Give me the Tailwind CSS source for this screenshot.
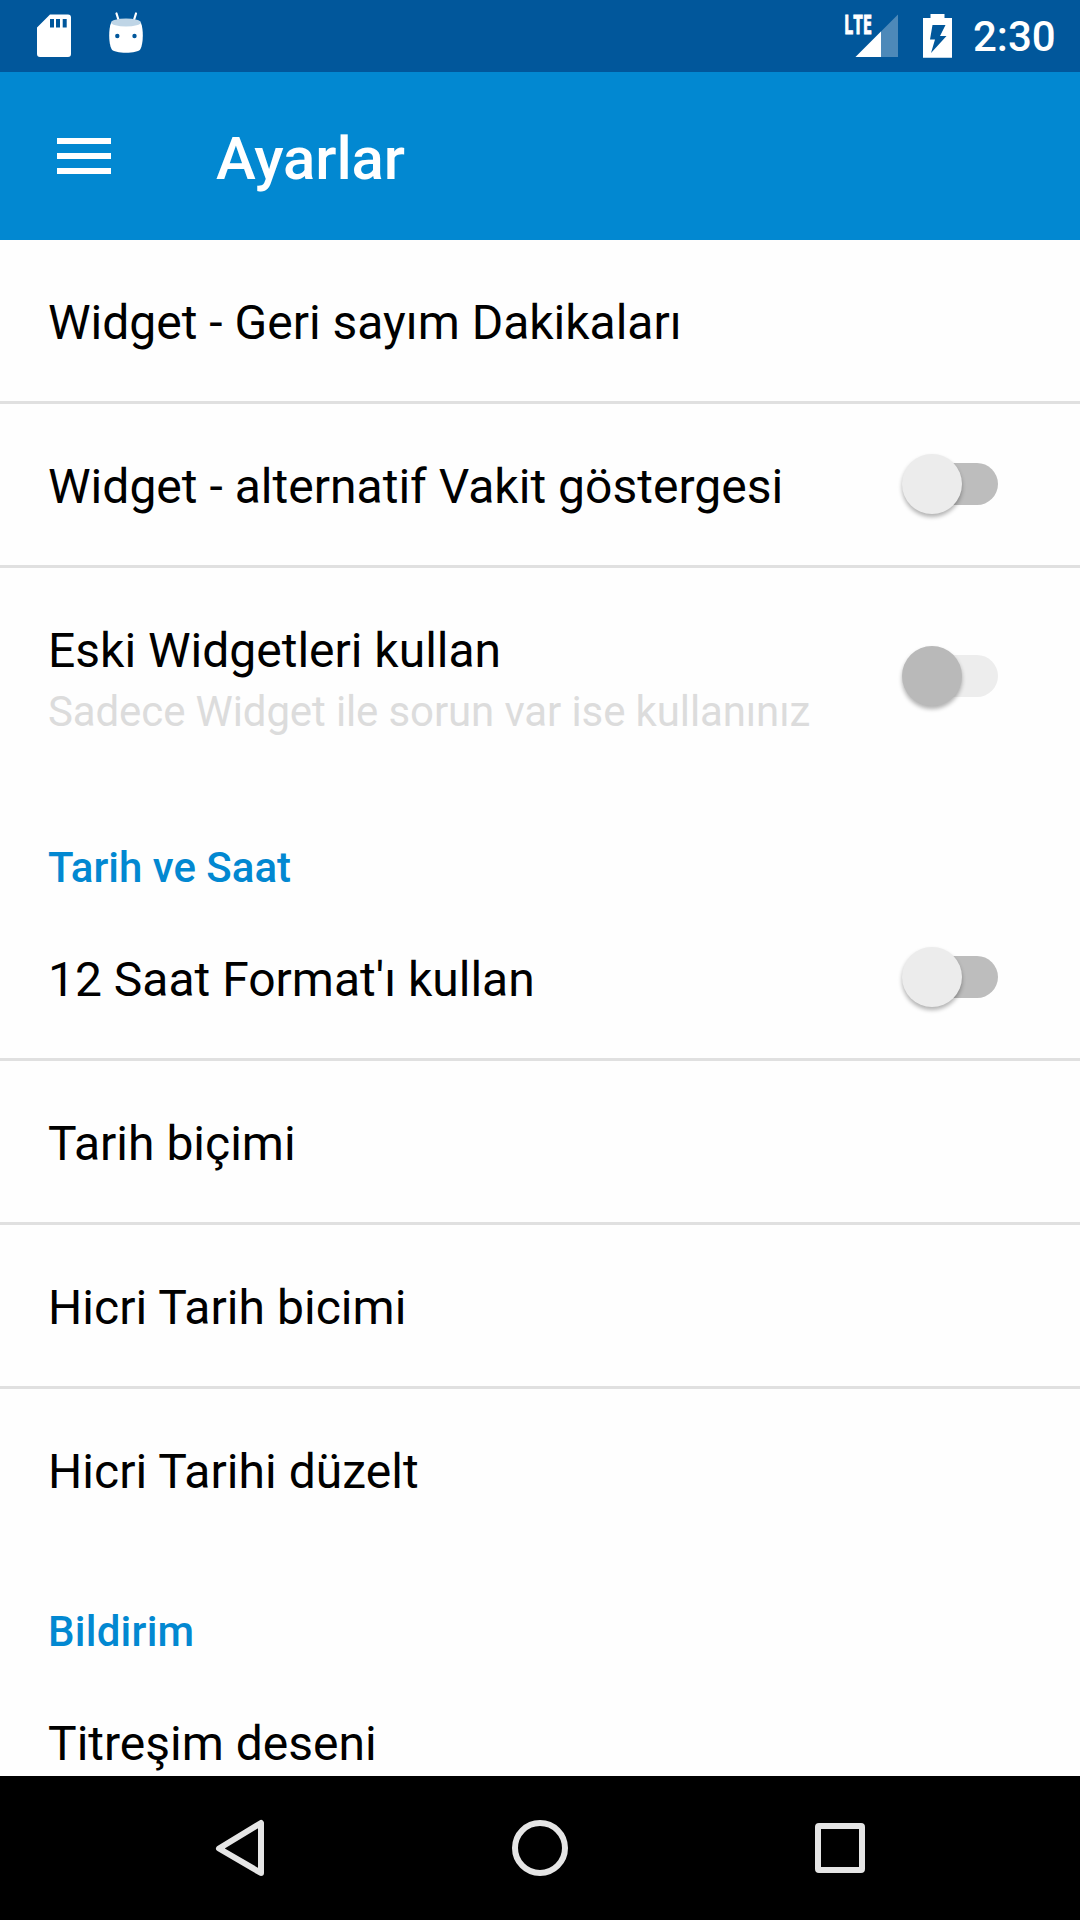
<!DOCTYPE html>
<html lang="tr">
<head>
<meta charset="utf-8">
<title>Ayarlar</title>
<script src="https://cdn.jsdelivr.net/npm/@tailwindcss/browser@4"></script>
</head>
<body class="font-['Roboto',sans-serif]">
<div class="flex h-[1920px] w-[1080px] flex-col overflow-hidden bg-[#fefefe] text-black">
  <!-- Status bar -->
  <header class="flex h-[72px] shrink-0 items-start bg-[#01579b] text-white">
    <svg class="h-[72px] w-[200px]" viewBox="0 0 200 72">
      <path fill="#fff" fill-rule="evenodd" d="M50 14.500H68a3 3 0 0 1 3 3V54a3 3 0 0 1-3 3H40a3 3 0 0 1-3-3V27.500ZM50 19v8.500h4V19ZM56 19v8.500h4V19ZM62.700 19v8.500h4V19Z"/>
      <path stroke="#fff" stroke-width="2.200" stroke-linecap="round" d="M116.500 13.500l2.500 8M136 13.500l-2.500 8"/>
      <path fill="#fff" d="M111 23C108.500 29 108.500 43 111.500 49C114 54 138 54 140.500 49C143.500 43 143.500 29 141 23Z"/>
      <ellipse cx="126" cy="22.500" rx="15" ry="4" fill="#bfd5e6"/>
      <circle cx="117.300" cy="36" r="2.200" fill="#01579b"/><circle cx="134.500" cy="36" r="2.200" fill="#01579b"/>
    </svg>
    <div class="flex-1"></div>
    <svg class="h-[72px] w-[140px]" viewBox="830 0 140 72">
      <path fill="#fff" fill-opacity=".3" d="M898 14.500V57H855.500Z"/>
      <path fill="#fff" d="M881 31.500V57H855.500Z"/>
      <text x="844" y="33.500" fill="#fff" stroke="#fff" stroke-width=".9" font-family="Open Sans" font-weight="700" font-size="26" textLength="28" lengthAdjust="spacingAndGlyphs">LTE</text>
      <path fill="#fff" fill-rule="evenodd" d="M930.500 14H944.500V18H952V57.700H923V18H930.500ZM932.500 25L930 39.500H935L931 53L946.500 36H940L945.500 25Z"/>
    </svg>
    <div class="mr-[22px] w-[88px] pt-[12px] pl-[3px] text-[42px] leading-[50px] font-medium">2:30</div>
  </header>

  <!-- App bar -->
  <div class="flex h-[168px] shrink-0 items-center bg-[#0288d1] text-white">
    <div class="ml-[57px] flex w-[54px] flex-col gap-[9px]">
      <div class="h-[6px] bg-white"></div><div class="h-[6px] bg-white"></div><div class="h-[6px] bg-white"></div>
    </div>
    <h1 class="ml-[105px] pt-[6px] text-[60px] leading-[70px] font-medium tracking-[-0.1px]">Ayarlar</h1>
  </div>

  <!-- Preference list -->
  <main class="flex min-h-0 flex-1 flex-col overflow-hidden text-[48px] leading-[56px]">
    <div class="flex h-[164px] shrink-0 items-center border-b-3 border-[#e0e0e0] pt-[5px] pl-12">Widget - Geri sayım Dakikaları</div>
    <div class="flex h-[164px] shrink-0 items-center justify-between border-b-3 border-[#e0e0e0] pr-[82px] pl-12">
      <div class="pt-[5px] tracking-[0.02px]">Widget - alternatif Vakit göstergesi</div>
      <div class="-mt-[1px] flex h-[42px] w-[96px] items-center rounded-full bg-[#bdbdbd] bg-clip-content pl-[20px]"><div class="-ml-[20px] size-[60px] shrink-0 rounded-full bg-[#ececec] shadow-[0_3px_4px_rgba(0,0,0,0.3)]"></div></div>
    </div>
    <div class="flex h-[219px] shrink-0 items-center justify-between pr-[82px] pl-12">
      <div class="pt-[8px]"><div>Eski Widgetleri kullan</div><div class="pt-[5px] text-[42px] leading-[56px] tracking-[-0.12px] text-[#dcdcdc]">Sadece Widget ile sorun var ise kullanınız</div></div>
      <div class="-mt-[3px] flex h-[42px] w-[96px] items-center rounded-full bg-[#ededed] bg-clip-content pl-[20px]"><div class="-ml-[20px] size-[60px] shrink-0 rounded-full bg-[#b9b9b9] shadow-[0_3px_4px_rgba(0,0,0,0.3)]"></div></div>
    </div>
    <h2 class="h-[110px] shrink-0 pt-[53px] pl-12 text-[42px] font-medium text-[#0288d1]">Tarih ve Saat</h2>
    <div class="flex h-[164px] shrink-0 items-center justify-between border-b-3 border-[#e0e0e0] pr-[82px] pl-12">
      <div class="pt-[5px]">12 Saat Format'ı kullan</div>
      <div class="-mt-[1px] flex h-[42px] w-[96px] items-center rounded-full bg-[#bdbdbd] bg-clip-content pl-[20px]"><div class="-ml-[20px] size-[60px] shrink-0 rounded-full bg-[#ececec] shadow-[0_3px_4px_rgba(0,0,0,0.3)]"></div></div>
    </div>
    <div class="flex h-[164px] shrink-0 items-center border-b-3 border-[#e0e0e0] pt-[5px] pl-12">Tarih biçimi</div>
    <div class="flex h-[164px] shrink-0 items-center border-b-3 border-[#e0e0e0] pt-[5px] pl-12 tracking-[0.05px]">Hicri Tarih bicimi</div>
    <div class="flex h-[161px] shrink-0 items-center pt-[5px] pl-12 tracking-[0.05px]">Hicri Tarihi düzelt</div>
    <h2 class="h-[110px] shrink-0 pt-[54px] pl-12 text-[42px] font-medium tracking-[0.25px] text-[#0288d1]">Bildirim</h2>
    <div class="flex h-[164px] shrink-0 items-center pt-[3px] pl-12">Titreşim deseni</div>
  </main>

  <!-- Navigation bar -->
  <nav class="h-[144px] shrink-0 bg-black">
    <svg class="h-[144px] w-[1080px]" viewBox="0 1776 1080 144" fill="none" stroke="#e5e5e5" stroke-width="6" stroke-linejoin="round">
      <path d="M261 1823V1873L219 1848.500Z"/>
      <circle cx="540" cy="1848" r="25"/>
      <rect x="818" y="1826" width="44" height="44" rx="1"/>
    </svg>
  </nav>
</div>
</body>
</html>
